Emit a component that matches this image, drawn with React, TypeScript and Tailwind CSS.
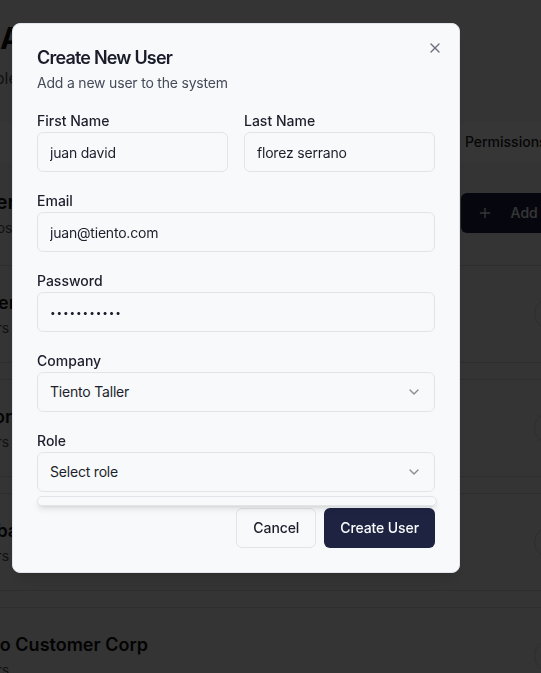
import React from "react";
import { X, ChevronDown, Plus } from "lucide-react";

function Field({ label, value, type = "text" }: { label: string; value: string; type?: string }) {
  const isPw = type === "password";
  return (
    <div className="flex flex-col gap-1">
      <label className="text-sm font-medium leading-none text-[#1c1f2b]">{label}</label>
      <input
        type={type}
        readOnly
        value={value}
        className={
          isPw
            ? "h-10 w-full rounded-md border border-[#e1e4e9] bg-[#f8f9fb] px-3 text-[10px] tracking-[0.9px] text-[#1c1f2b] outline-none"
            : "h-10 w-full rounded-md border border-[#e1e4e9] bg-[#f8f9fb] px-3 text-sm tracking-[-0.2px] text-[#1c1f2b] outline-none"
        }
      />
    </div>
  );
}

function SelectField({ label, value, open = false }: { label: string; value: string; open?: boolean }) {
  return (
    <div className="flex flex-col gap-1">
      <label className="text-sm font-medium leading-none text-[#1c1f2b]">{label}</label>
      <div className="relative">
        <button className="flex h-10 w-full items-center justify-between rounded-md border border-[#e1e4e9] bg-[#f8f9fb] px-3 text-sm tracking-[-0.2px] text-[#1c1f2b]">
          <span>{value}</span>
          <ChevronDown className="h-4 w-4 opacity-50" strokeWidth={2} />
        </button>
        {open && (
          <div className="absolute left-0 right-[-2px] top-[calc(100%+4px)] h-[10px] rounded-md border border-[#e1e4e9] bg-[#f8f9fb] shadow-md" />
        )}
      </div>
    </div>
  );
}

const rows = [
  { name: "Master Tenant", users: "3 users", cls: "-ml-[5px] text-lg font-semibold leading-7 text-[#111111]" },
  { name: "Vendor Inc", users: "3 users", cls: "-ml-[11px] text-lg font-semibold leading-7 text-[#111111]" },
  { name: "Prueba SAS", users: "3 users", cls: "-ml-[4px] text-lg font-semibold leading-7 text-[#111111]" },
  { name: "Demo Customer Corp", users: "3 users", cls: "text-lg font-semibold leading-7 text-[#111111]" },
];

export default function App() {
  return (
    <div className="relative h-[673px] w-full overflow-hidden bg-[#f4f4f5] font-['Inter',sans-serif]">
      {/* Background page */}
      <div className="-ml-[64px] w-[673px] pt-5">
        <h1 className="pl-16 text-3xl font-bold leading-9 text-[#111111]">Admin Panel</h1>
        <p className="mt-[10px] -ml-[16px] text-base leading-6 text-[#52525b]">
          Configurable access control for every company
        </p>
        <div className="-ml-[136px] mt-8 grid h-10 w-[810px] grid-cols-4 items-center rounded-md bg-white p-1 text-sm font-medium text-[#222222]">
          <div className="text-center">Overview</div>
          <div className="text-center">Companies</div>
          <div className="text-center">Users</div>
          <div className="text-center">Permissions</div>
        </div>
        <div className="mt-[26px] flex items-center justify-between px-6 pb-[27px]">
          <div className="flex flex-col">
            <h2 className="ml-[10px] text-xl font-semibold leading-7 text-[#111111]">Users</h2>
            <p className="mt-0.5 -ml-[45px] text-sm leading-5 text-[#52525b]">All users across companies</p>
          </div>
          <button className="flex h-10 items-center gap-[18px] rounded-md bg-[#1e2342] pl-4 pr-3 text-sm font-medium text-white">
            <Plus className="h-4 w-4" />
            <span>Add User</span>
          </button>
        </div>
        <div className="flex flex-col gap-4">
          {rows.map((r) => (
            <div
              key={r.name}
              className="flex items-center justify-between border-y border-[#d4d4d8] pb-6 pl-6 pr-[43px] pt-[23px]"
            >
              <div className="flex flex-col">
                <div className={r.cls}>{r.name}</div>
                <div className="mt-px text-sm leading-5 text-[#52525b]">{r.users}</div>
              </div>
              <div className="h-8 w-8 rounded-full border border-[#d4d4d8]" />
            </div>
          ))}
        </div>
      </div>

      {/* Overlay */}
      <div className="fixed inset-0 bg-black/[0.79]" />

      {/* Dialog */}
      <div className="fixed left-[12px] top-[23px] w-[448px] rounded-lg border border-[#e1e4e9] bg-[#f8f9fb] p-6 shadow-lg">
        <button className="absolute right-4 top-4 text-[#4b5060] opacity-80">
          <X className="h-4 w-4" strokeWidth={2} />
        </button>
        <h2 className="mt-px text-lg font-semibold leading-none tracking-[-0.8px] text-[#1a1d29]">Create New User</h2>
        <p className="mt-1.5 text-sm leading-5 tracking-[-0.2px] text-[#464b58]">Add a new user to the system</p>

        <div className="mt-[21px] flex flex-col gap-[22px]">
          <div className="grid grid-cols-2 gap-4">
            <Field label="First Name" value="juan david" />
            <Field label="Last Name" value="florez serrano" />
          </div>
          <Field label="Email" value="juan@tiento.com" />
          <Field label="Password" value="password123" type="password" />
          <SelectField label="Company" value="Tiento Taller" />
          <SelectField label="Role" value="Select role" open />
        </div>

        <div className="mt-4 flex justify-end gap-2">
          <button className="h-10 rounded-md border border-[#e1e4e9] bg-[#f8f9fb] px-4 text-sm font-medium tracking-[-0.1px] text-[#1c1f2b]">
            Cancel
          </button>
          <button className="h-10 rounded-md bg-[#1e2342] px-4 text-sm font-medium tracking-[-0.1px] text-[#f8fafc]">
            Create User
          </button>
        </div>
      </div>
    </div>
  );
}
